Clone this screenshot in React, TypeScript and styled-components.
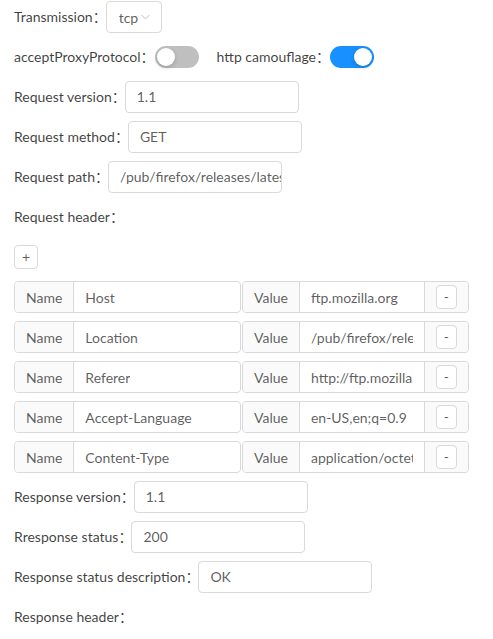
import React from "react";
import styled, { createGlobalStyle } from "styled-components";

const Global = createGlobalStyle`
  html, body { margin: 0; padding: 0; background: #fff; }
  body {
    font-family: Lato, "Noto Sans CJK SC", sans-serif;
    font-size: 14px;
    color: rgba(0, 0, 0, 0.65);
  }
  * { box-sizing: border-box; }
`;

const Form = styled.div`
  display: flex;
  flex-direction: column;
  gap: 8px;
  padding: 1px 24px 0 14px;
`;

const Row = styled.div<{ $gap?: number }>`
  display: flex;
  align-items: center;
  height: 32px;
  gap: ${(p) => p.$gap ?? 0}px;
`;

const Item = styled.div`
  display: flex;
  align-items: center;
`;

const Label = styled.span`
  color: rgba(0, 0, 0, 0.76);
  white-space: nowrap;
  line-height: 32px;
`;

const TextBox = styled.div`
  width: 174px;
  height: 32px;
  margin-left: -1px;
  border: 1px solid #d9d9d9;
  border-radius: 4px;
  padding-left: 11px;
  line-height: 30px;
  white-space: nowrap;
  overflow: hidden;
  color: rgba(0, 0, 0, 0.65);
`;

const Select = styled.div`
  width: 56px;
  height: 32px;
  margin-left: -1px;
  border: 1px solid #d9d9d9;
  border-radius: 4px;
  padding-left: 12px;
  display: flex;
  align-items: center;
  gap: 3px;
  color: rgba(0, 0, 0, 0.65);
`;

const Toggle = styled.div<{ $on?: boolean }>`
  position: relative;
  width: 44px;
  height: 22px;
  border-radius: 11px;
  background: ${(p) => (p.$on ? "#1890ff" : "rgba(0,0,0,0.25)")};
  &::after {
    content: "";
    position: absolute;
    top: 2px;
    left: ${(p) => (p.$on ? "24px" : "2px")};
    width: 18px;
    height: 18px;
    border-radius: 50%;
    background: #fff;
    box-shadow: 0 2px 4px rgba(0, 35, 11, 0.2);
  }
`;

const SmallButton = styled.button`
  height: 24px;
  padding: 0 7px;
  border: 1px solid #d9d9d9;
  border-radius: 4px;
  background: #fff;
  font-family: inherit;
  font-size: 14px;
  color: rgba(0, 0, 0, 0.65);
  line-height: 22px;
  cursor: pointer;
`;

const HeaderRow = styled.div`
  display: grid;
  grid-template-columns: 1fr 1fr;
  gap: 1px;
  height: 32px;
`;

const Group = styled.div`
  display: flex;
  height: 32px;
  border: 1px solid #d9d9d9;
  border-radius: 4px;
  overflow: hidden;
  min-width: 0;
`;

const Addon = styled.div`
  flex: none;
  display: flex;
  align-items: center;
  justify-content: center;
  padding: 0 11px;
  background: #fafafa;
  color: rgba(0, 0, 0, 0.65);
  & + & , & + div { border-left: 1px solid #d9d9d9; }
`;

const GroupInput = styled.div`
  flex: 1;
  min-width: 0;
  padding: 0 11px;
  display: flex;
  align-items: center;
  border-left: 1px solid #d9d9d9;
  & + div { border-left: 1px solid #d9d9d9; }
`;

const Clip = styled.span`
  display: block;
  overflow: hidden;
  white-space: nowrap;
`;

const Chevron = () => (
  <svg width="9" height="6" viewBox="0 0 9 6" fill="none">
    <path d="M0.5 0.8 L4.5 5 L8.5 0.8" stroke="#bfbfbf" strokeWidth="1" />
  </svg>
);

const headers = [
  ["Host", "ftp.mozilla.org"],
  ["Location", "/pub/firefox/releases/latest/"],
  ["Referer", "http://ftp.mozilla.org/"],
  ["Accept-Language", "en-US,en;q=0.9"],
  ["Content-Type", "application/octet-stream"],
];

export default function App() {
  return (
    <>
      <Global />
      <Form>
        <Row>
          <Label>Transmission：</Label>
          <Select>
            tcp <Chevron />
          </Select>
        </Row>
        <Row $gap={18}>
          <Item>
            <Label>acceptProxyProtocol：</Label>
            <Toggle />
          </Item>
          <Item>
            <Label>http camouflage：</Label>
            <Toggle $on />
          </Item>
        </Row>
        <Row>
          <Label>Request version：</Label>
          <TextBox>1.1</TextBox>
        </Row>
        <Row>
          <Label>Request method：</Label>
          <TextBox>GET</TextBox>
        </Row>
        <Row>
          <Label>Request path：</Label>
          <TextBox>/pub/firefox/releases/latest/</TextBox>
        </Row>
        <Row>
          <Label>Request header：</Label>
        </Row>
        <Row>
          <SmallButton>+</SmallButton>
        </Row>
        {headers.map(([name, value]) => (
          <HeaderRow key={name}>
            <Group>
              <Addon>Name</Addon>
              <GroupInput>
                <Clip>{name}</Clip>
              </GroupInput>
            </Group>
            <Group>
              <Addon>Value</Addon>
              <GroupInput>
                <Clip>{value}</Clip>
              </GroupInput>
              <Addon>
                <SmallButton>-</SmallButton>
              </Addon>
            </Group>
          </HeaderRow>
        ))}
        <Row>
          <Label>Response version：</Label>
          <TextBox>1.1</TextBox>
        </Row>
        <Row>
          <Label>Rresponse status：</Label>
          <TextBox>200</TextBox>
        </Row>
        <Row>
          <Label>Response status description：</Label>
          <TextBox>OK</TextBox>
        </Row>
        <Row>
          <Label>Response header：</Label>
        </Row>
      </Form>
    </>
  );
}
